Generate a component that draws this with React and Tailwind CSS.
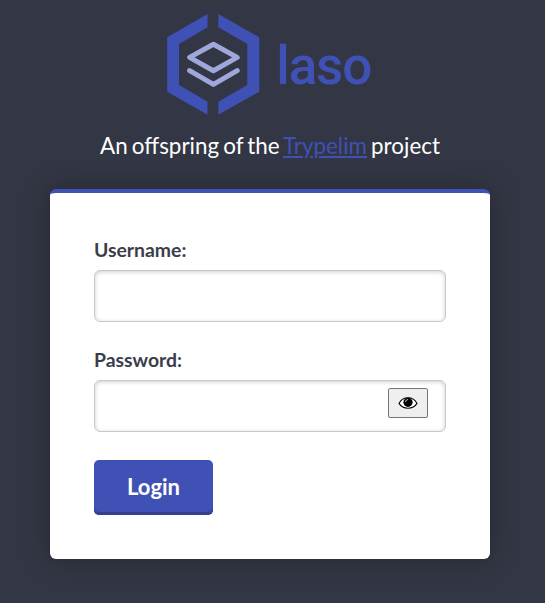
function Logo() {
  return (
    <svg className="block h-[120px] w-full" viewBox="0 0 545 120" role="img" aria-label="laso">
      <g fill="#3f51b5">
        <path d="M207.5 14 167.2 37.3v54.4l40.3 23v-13L179 85V44l28.5-16.7z" />
        <path d="M218.3 14 259.3 37.3v54.4l-41 23v-13L247.3 85V44l-29-16.7z" />
      </g>
      <g fill="none" stroke="#9fa8da" strokeWidth="5" strokeLinecap="round" strokeLinejoin="round">
        <path d="M213.4 44.2 189.6 57.4l23.8 13.4 23.8-13.4z" />
        <path d="M189.6 70.6 213.4 84.4l23.8-13.8" />
      </g>
      <text x="276.3" y="84.3" fill="#3f51b5" fontSize="53" textLength="96" lengthAdjust="spacing" className="font-['Roboto',sans-serif] font-medium">
        laso
      </text>
    </svg>
  );
}

function Field({ id, label, type, children }) {
  return (
    <div>
      <label htmlFor={id} className="block text-[19.4px] leading-6 font-bold text-[#3b3e4a]">
        {label}
      </label>
      <div className="mt-2 flex h-[52px] w-[352px] items-start rounded-[6px] border border-[#c8c8c8] bg-white pt-[7px] pr-[17px] shadow-[inset_0_1px_4px_rgba(0,0,0,0.2)]">
        <input id={id} type={type} className="h-8 min-w-0 flex-1 bg-transparent px-3 outline-none" />
        {children}
      </div>
    </div>
  );
}

export default function App() {
  return (
    <main className="h-[603px] w-[545px] overflow-hidden bg-[#333644] font-['Lato',sans-serif]">
      <Logo />
      <p className="mt-[10px] pr-[5px] text-center text-[22.4px] leading-8 [word-spacing:-1.6px] whitespace-nowrap text-white">
        An offspring of the{' '}
        <a href="#" className="text-[#3f51b5] underline">Trypelim</a> project
      </p>
      <form className="mt-[27px] ml-[50px] h-[370px] w-[440px] rounded-[6px] border-t-4 border-[#3f51b5] bg-white px-11 pt-[45px] shadow-[0_0_28px_rgba(0,0,0,0.28)]">
        <Field id="username" label="Username:" type="text" />
        <div className="mt-[26px]">
          <Field id="password" label="Password:" type="password">
            <button type="button" aria-label="Show password" className="flex h-[30px] w-10 items-center justify-center rounded-[2px] border border-[#767676] bg-[#efefef]">
              <svg width="20" height="14" viewBox="0 0 20 14">
                <path d="M1 7.4C5-.2 15-.2 19 7.4 15 13.8 5 13.8 1 7.4z" fill="#fff" stroke="#000" strokeWidth="1.1" />
                <circle cx="10" cy="6.3" r="4.6" />
                <path d="M7.6 6C7.6 4.6 8.4 3.8 9.8 3.6" fill="none" stroke="#ddd" strokeWidth="1" />
              </svg>
            </button>
          </Field>
        </div>
        <button type="button" className="mt-7 flex h-[55px] w-[119px] items-center justify-center rounded-[5px] bg-[#3f51b5] pb-0.5 text-[22px] font-bold text-white shadow-[inset_0_-3px_0_#32408f]">
          Login
        </button>
      </form>
    </main>
  );
}
